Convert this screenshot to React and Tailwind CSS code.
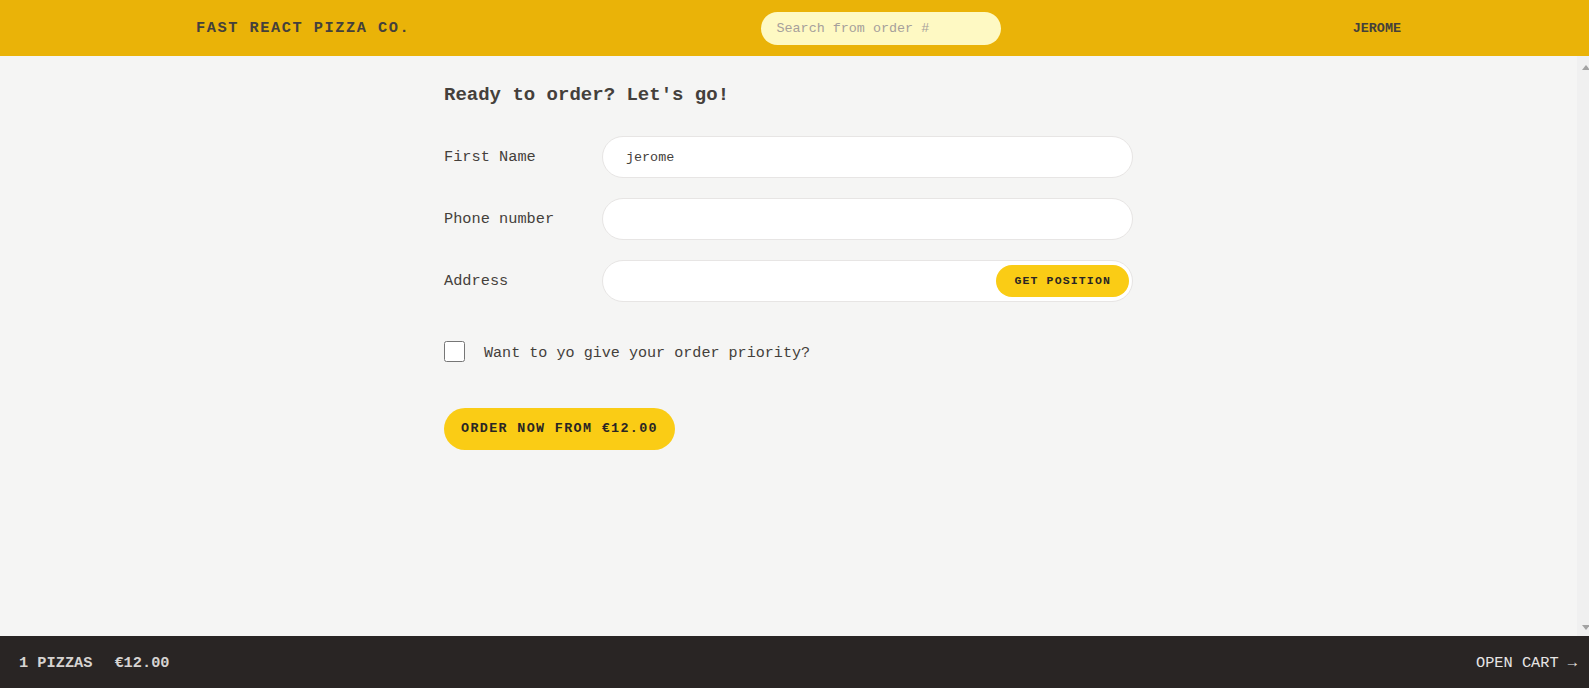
export default function App() {
  return (
    <div className="grid h-screen grid-rows-[56px_1fr_52px] font-['Liberation_Mono',monospace] text-stone-700">
      <header className="flex items-center justify-between bg-[#eab308] pl-[196px] pr-[188px]">
        <a className="text-[15.3px] font-semibold uppercase tracking-widest text-stone-700">
          Fast React Pizza Co.
        </a>
        <input
          className="h-[33px] w-[240px] rounded-full bg-[#fef9c3] px-[15px] text-[13.4px] text-stone-700 outline-none placeholder:text-stone-400"
          placeholder="Search from order #"
        />
        <div className="pt-[2px] text-[13.4px] font-semibold uppercase text-stone-700">jerome</div>
      </header>

      <main className="flex min-h-0 bg-[#f5f5f4]">
        <div className="min-w-0 flex-1 overflow-hidden">
          <div className="mx-auto w-[689px] pt-[26px]">
            <h2 className="mb-[27px] text-[19px] font-semibold leading-[27px] text-stone-700">
              Ready to order? Let's go!
            </h2>

            <div className="mb-[20px] flex items-center gap-2">
              <label className="shrink-0 basis-[150px] text-[15.3px]">First Name</label>
              <input
                className="h-[42px] grow rounded-full border border-stone-200 bg-white px-[23px] text-[13.4px] text-stone-700 outline-none"
                defaultValue="jerome"
              />
            </div>

            <div className="mb-[20px] flex items-center gap-2">
              <label className="shrink-0 basis-[150px] text-[15.3px]">Phone number</label>
              <input className="h-[42px] grow rounded-full border border-stone-200 bg-white px-[23px] text-[13.4px] outline-none" />
            </div>

            <div className="mb-[38px] flex items-center gap-2">
              <label className="shrink-0 basis-[150px] text-[15.3px]">Address</label>
              <div className="relative grow">
                <input className="h-[42px] w-full rounded-full border border-stone-200 bg-white px-[23px] text-[13.4px] outline-none" />
                <button className="absolute right-[4px] top-[5px] h-[32px] rounded-full bg-[#facc15] px-[18px] text-[11.5px] font-semibold uppercase tracking-widest text-stone-800">
                  Get position
                </button>
              </div>
            </div>

            <div className="mb-[46px] flex h-[22px] items-center gap-[19px]">
              <input type="checkbox" className="h-[21px] w-[21px] accent-yellow-400" />
              <label className="pt-[4px] text-[15.1px] font-medium">Want to yo give your order priority?</label>
            </div>

            <button className="h-[42px] rounded-full bg-[#facc15] px-[17px] text-[13.4px] font-semibold uppercase tracking-widest text-stone-800">
              Order now from €12.00
            </button>
          </div>
        </div>
        <div className="flex w-[12px] shrink-0 flex-col items-end justify-between bg-[#f0f0f0] pb-[6px] pt-[9px]">
          <svg width="8" height="5" viewBox="0 0 8 5" className="mr-[-1px]">
            <path d="M4 0L8 5H0Z" fill="#a3a3a3" />
          </svg>
          <svg width="8" height="5" viewBox="0 0 8 5" className="mr-[-1px]">
            <path d="M0 0H8L4 5Z" fill="#a3a3a3" />
          </svg>
        </div>
      </main>

      <footer className="flex items-center justify-between bg-[#292524] pl-[19px] pr-[12px] pt-[3px] text-[15.3px] uppercase text-stone-200">
        <p className="flex gap-[22px] font-semibold text-stone-300">
          <span>1 pizzas</span>
          <span>€12.00</span>
        </p>
        <a>Open cart &rarr;</a>
      </footer>
    </div>
  );
}
